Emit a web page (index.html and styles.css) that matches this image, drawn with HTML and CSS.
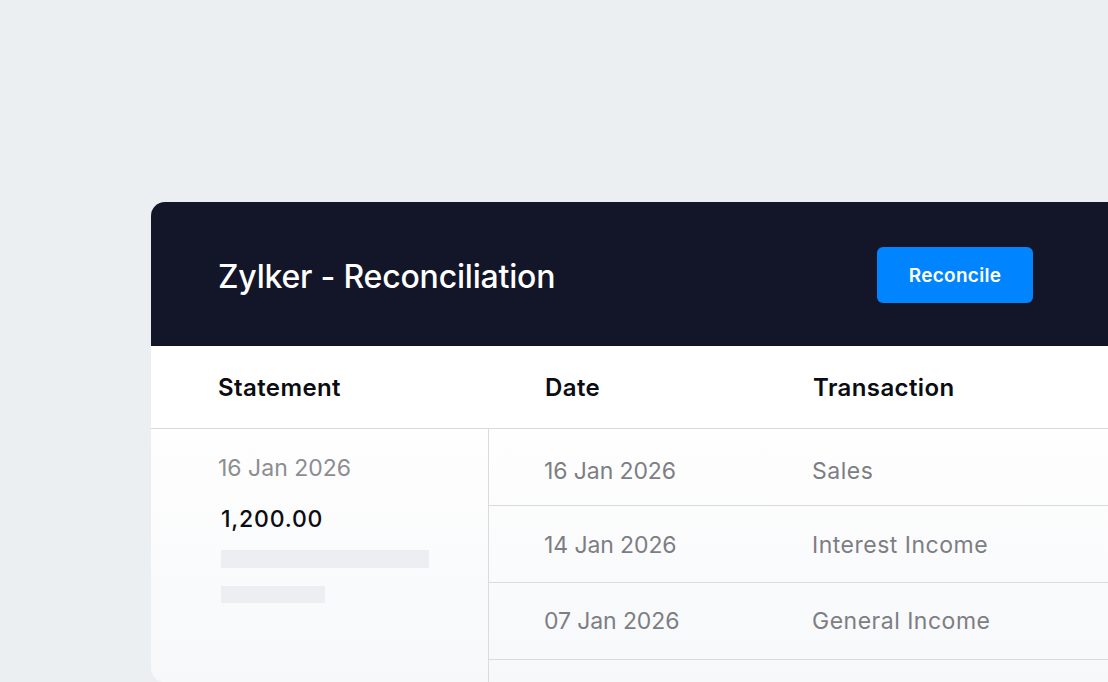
FILE: index.html
```html
<!DOCTYPE html>
<html>
<head>
<meta charset="utf-8">
<link rel="stylesheet" href="styles.css">
</head>
<body>
<div class="page">
  <div class="card">
    <div class="card-head">
      <h1 class="title">Zylker - Reconciliation</h1>
      <button class="btn">Reconcile</button>
    </div>
    <div class="cols">
      <div class="th th-statement">Statement</div>
      <div class="th th-date">Date</div>
      <div class="th th-trans">Transaction</div>
    </div>
    <div class="body">
      <div class="statement">
        <div class="st-date">16 Jan 2026</div>
        <div class="st-amount">1,200.00</div>
        <div class="bar bar-long"></div>
        <div class="bar bar-short"></div>
      </div>
      <div class="rows">
        <div class="row row-1"><span class="c-date">16 Jan 2026</span><span class="c-trans">Sales</span></div>
        <div class="row row-2"><span class="c-date">14 Jan 2026</span><span class="c-trans">Interest Income</span></div>
        <div class="row"><span class="c-date">07 Jan 2026</span><span class="c-trans">General Income</span></div>
        <div class="row row-empty"></div>
      </div>
    </div>
  </div>
</div>
</body>
</html>
```

FILE: styles.css
```css
html, body {
  margin: 0;
  padding: 0;
  width: 1108px;
  height: 682px;
  overflow: hidden;
  background: #eceff2;
  font-family: "Inter", "Noto Sans", sans-serif;
}
.page {
  padding: 202px 0 0 151px;
}
.card {
  width: 1000px;
  height: 480px;
  border-radius: 14px;
  overflow: hidden;
  background: linear-gradient(180deg, #ffffff 40%, #f7f8fa 100%);
}
.card-head {
  height: 144px;
  background: #121628;
  display: flex;
  align-items: center;
  padding-left: 67px;
  box-sizing: border-box;
}
.title {
  margin: 0;
  color: #ffffff;
  font-family: "Inter", sans-serif;
  font-weight: 500;
  font-size: 32px;
  letter-spacing: -0.2px;
  width: 659px;
  position: relative;
  top: 2px;
}
.btn {
  width: 156px;
  height: 56px;
  border: 0;
  border-radius: 6px;
  background: #0084ff;
  color: #ffffff;
  font-family: "Inter", sans-serif;
  font-weight: 600;
  font-size: 19px;
  letter-spacing: 0.3px;
  padding: 0;
  margin-top: 2px;
}
.cols {
  display: grid;
  grid-template-columns: 394px 268px 1fr;
  height: 82px;
  align-items: center;
  border-bottom: 1px solid #d9dbde;
  background: #ffffff;
}
.th {
  font-size: 24px;
  font-weight: 600;
  letter-spacing: 0.4px;
  color: #0c0d12;
}
.th-statement { padding-left: 67px; }
.body {
  display: grid;
  grid-template-columns: 338px 1fr;
}
.statement {
  border-right: 1px solid #d9dbde;
  padding: 26px 0 0 67px;
  height: 300px;
}
.st-date {
  font-size: 23px;
  color: #8c8d92;
  line-height: 26px;
}
.st-amount {
  font-size: 23px;
  color: #0c0d12;
  font-weight: 500;
  letter-spacing: 0.8px;
  line-height: 26px;
  margin: 25px 0 0 3px;
}
.bar {
  background: #eceef1;
  height: 18px;
  margin-left: 3px;
}
.bar-long { width: 208px; margin-top: 18px; }
.bar-short { width: 104px; height: 17px; margin-top: 18px; }
.rows {
  display: flex;
  flex-direction: column;
}
.row {
  height: 77px;
  box-sizing: border-box;
  border-bottom: 1px solid #d9dbde;
  display: grid;
  grid-template-columns: 268px 1fr;
  align-items: center;
  padding-left: 55px;
  font-size: 23px;
  color: #7d7e83;
}
.row-1 { padding-top: 8px; }
.row-2 { padding-top: 2px; }
.c-date { letter-spacing: -0.1px; }
.c-trans { letter-spacing: 0.5px; }
.row-empty { border-bottom: 0; }
```
